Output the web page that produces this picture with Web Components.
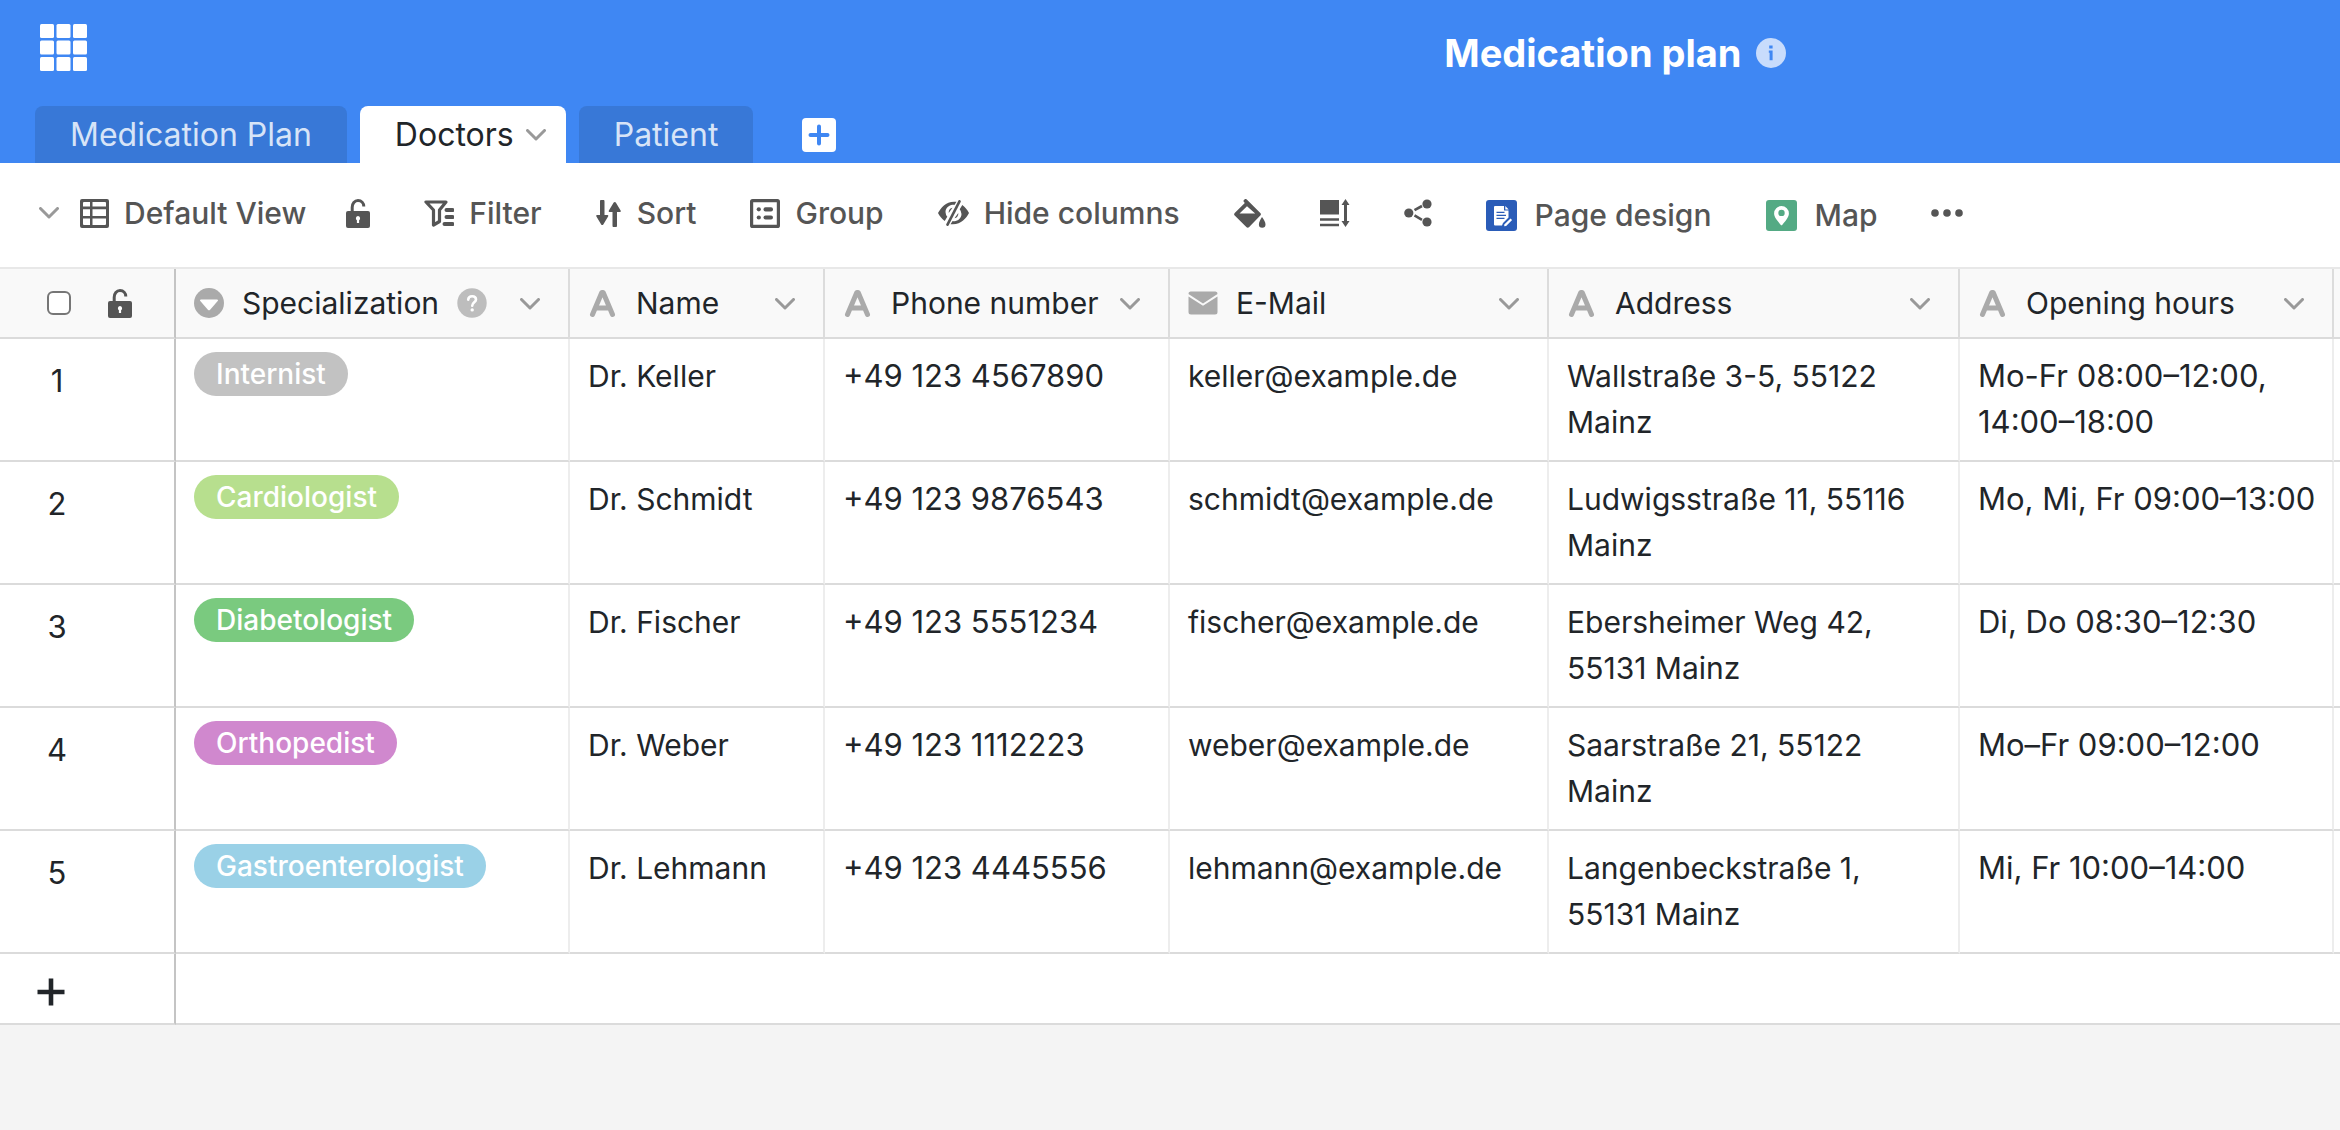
<!DOCTYPE html>
<html lang="en">
<head>
<meta charset="utf-8">
<meta name="viewport" content="width=device-width, initial-scale=1">
<title>Medication plan</title>
<style>
  html, body { margin: 0; min-height: 100%; background: #f4f4f4; }
  body { font-family: Inter, "Liberation Sans", sans-serif; color: #212529; }
</style>
</head>
<body>
<base-app></base-app>

<script>
const ICONS = {
  apps: ['0 0 47 47', '<g fill="#fff"><rect width="14" height="14" rx="1.5"/><rect x="16.5" width="14" height="14" rx="1.5"/><rect x="33" width="14" height="14" rx="1.5"/><rect y="16.5" width="14" height="14" rx="1.5"/><rect x="16.5" y="16.5" width="14" height="14" rx="1.5"/><rect x="33" y="16.5" width="14" height="14" rx="1.5"/><rect y="33" width="14" height="14" rx="1.5"/><rect x="16.5" y="33" width="14" height="14" rx="1.5"/><rect x="33" y="33" width="14" height="14" rx="1.5"/></g>'],
  info: ['0 0 30 30', '<circle cx="15" cy="15" r="15" fill="#c8dcfc"/><path d="M13.2 7.4h3.4v3.2h-3.4zM12.8 12.6h3.8v9.6h-3v-7.4h-.8z" fill="#3f87f3"/>'],
  chevron: ['0 0 20 12', '<path d="M1.5 1.500 10 10 18.500 1.500" fill="none" stroke="currentColor" stroke-width="3" stroke-linecap="round" stroke-linejoin="round"/>'],
  addTab: ['0 0 34 34', '<rect width="34" height="34" rx="4" fill="#fff"/><path d="M17 8.500v17M8.500 17h17" stroke="#3f87f3" stroke-width="4" stroke-linecap="round"/>'],
  table: ['0 0 29 29', '<path fill="currentColor" fill-rule="evenodd" d="M2 0h25a2 2 0 0 1 2 2v25a2 2 0 0 1-2 2H2a2 2 0 0 1-2-2V2a2 2 0 0 1 2-2zm2 3a1 1 0 0 0-1 1v3.500h7V3zm8.500 0v4.500H26V4a1 1 0 0 0-1-1zM3 10.300V17h7v-6.700zm9.500 0V17H26v-6.700zM3 19.500V25a1 1 0 0 0 1 1h6v-6.500zm9.500 0V26H25a1 1 0 0 0 1-1v-5.500z"/>'],
  lock: ['0 0 24 29', '<path d="M6.200 13V8.200C6.200 4.600 8.600 1.500 12 1.500s5.800 2.600 5.800 6" fill="none" stroke="currentColor" stroke-width="3"/><rect y="12" width="24" height="17" rx="2" fill="currentColor"/><path d="M12 17a2.300 2.300 0 0 0-1.100 4.200V24h2.200v-2.800A2.300 2.300 0 0 0 12 17z" fill="#fff"/>'],
  filter: ['0 0 30 28', '<path d="M2 3h20l-6.500 8v11.500L9.500 26V11z" fill="none" stroke="currentColor" stroke-width="3.200" stroke-linejoin="round"/><path d="M22.500 11h6M22.500 18h6M20.500 25h8" stroke="currentColor" stroke-width="4" stroke-linecap="round"/>'],
  sort: ['0 0 26 27', '<g fill="currentColor"><path d="M4 1.500a1.500 1.500 0 0 1 4.500 0V15h3c.8 0 1 .8.600 1.400L7.300 24.500c-.5.800-1.600.8-2.100 0L.4 16.400c-.4-.600-.2-1.400.6-1.400h3z"/><path d="M16.500 25.500a1.500 1.500 0 0 0 4.500 0V12h3c.8 0 1-.8.600-1.400L19.800 2.500c-.5-.8-1.600-.8-2.100 0l-4.800 8.100c-.4.600-.2 1.400.6 1.400h3z"/></g>'],
  group: ['0 0 30 29', '<rect x="1.600" y="1.600" width="26.800" height="25.800" rx="1" fill="none" stroke="currentColor" stroke-width="3.200"/><g fill="currentColor"><circle cx="8.800" cy="10.300" r="2.100"/><circle cx="8.800" cy="18.500" r="2.100"/><rect x="13.500" y="8.200" width="9.500" height="4.200" rx="2"/><rect x="13.500" y="16.400" width="9.500" height="4.200" rx="2"/></g>'],
  hide: ['0 0 31 26', '<g fill="currentColor"><path d="M18.500 1.800C8.500.5 3 7.500 0 13c1.500 3 3.800 5.800 6.700 8l2.600-4.200A8 8 0 0 1 7.500 12c0-4 3.500-7 7-7.300.8 0 1.300 0 1.900.2z"/><path d="M14.500 7.700c-2.500.3-4 2.500-3.800 5.300z"/><path d="M12.500 24.200C22.500 25.500 28 18.500 31 13c-1.500-3-3.800-5.800-6.700-8l-2.600 4.200a8 8 0 0 1 1.800 4.800c0 4-3.500 7-7 7.300-.8 0-1.300 0-1.900-.2z"/><path d="M16.500 18.300c2.500-.3 4-2.500 3.800-5.300z"/></g><path d="M21.500 1.300 9.500 24.700" stroke="currentColor" stroke-width="2.600" stroke-linecap="round"/>'],
  fill: ['0 0 32 29', '<path fill="currentColor" fill-rule="evenodd" d="M10.500.5c1-.8 2-.4 2.800.4L26.300 14c.8.800.8 1.700 0 2.500L15.200 28c-.9.900-2 .9-2.900 0L.7 16.500c-.8-.8-.8-1.800 0-2.600L10.800 4 9.600 2.600c-.4-.7 0-1.500.9-2.100zM13 7.200 5.500 14.600h15.700z"/><path fill="currentColor" d="M28 18c2 3 3.500 5.200 3.500 7.400a3.200 3.200 0 0 1-6.600 0c0-2.200 1.300-4.400 3.100-7.400z"/>'],
  rowHeight: ['0 0 30 28', '<path d="M0 1h19v14.500H0z" fill="currentColor"/><path d="M0 20.500h19M0 26h19" stroke="currentColor" stroke-width="2.400"/><path d="M25.500 4v20" stroke="currentColor" stroke-width="3"/><path d="m25.500 0 4 6h-8zM25.500 28l4-6h-8z" fill="currentColor"/>'],
  share: ['0 0 28 28', '<path d="m10.500 11.200 7.500-4.200M10.500 16.400l7.500 4.400" stroke="currentColor" stroke-width="2.600"/><g fill="currentColor"><circle cx="4.800" cy="14" r="4.600"/><circle cx="23" cy="5" r="4.600"/><circle cx="23" cy="23" r="4.600"/></g>'],
  page: ['0 0 31 31', '<rect width="31" height="31" rx="3" fill="#2a5cb8"/><path d="M9 6h9v4.500h4.500v7L17 23l-1 2.500H9a1 1 0 0 1-1-1V7a1 1 0 0 1 1-1z" fill="#fff"/><path d="m19.300 6 3.400 3.400h-3.400z" fill="#fff"/><path d="M10.500 12.400h8M10.500 15.400h9.500M10.500 18.400h8" stroke="#2a5cb8" stroke-width="1.400"/><path d="m24.500 18.500 1.600 1.600-6 5.800-2 .4.400-2z" fill="#fff"/>'],
  map: ['0 0 31 31', '<rect width="31" height="31" rx="3" fill="#54aa84"/><path fill="#fff" fill-rule="evenodd" d="M15.500 6a7.400 7.400 0 0 1 7.400 7.500c0 4-4.200 8.200-6.500 11.300-.6.700-1.200.7-1.800 0-2.300-3.100-6.500-7.300-6.500-11.300A7.400 7.400 0 0 1 15.500 6zm0 3.700a3.200 3.200 0 1 0 0 6.400 3.200 3.200 0 0 0 0-6.400z"/>'],
  more: ['0 0 32 8', '<g fill="currentColor"><circle cx="4" cy="4" r="3.800"/><circle cx="16" cy="4" r="3.800"/><circle cx="28" cy="4" r="3.800"/></g>'],
  select: ['0 0 30 30', '<circle cx="15" cy="15" r="15" fill="#aaa"/><path d="M7 11.500h16c1 0 1.300.8.700 1.500l-7.600 8.700c-.7.800-1.500.8-2.200 0L6.300 13c-.6-.7-.3-1.500.7-1.500z" fill="#fff"/>'],
  text: ['0 0 30 30', '<path d="M4.500 26.500 13.800 4.500h1.400L24.500 26.500M9 20h11.500" fill="none" stroke="#aaa" stroke-width="5" stroke-linecap="round" stroke-linejoin="round"/>'],
  mail: ['0 0 30 30', '<g fill="#aaa"><path d="M2.500 3.500h25a2.300 2.300 0 0 1 2 2.500L15 15.500.5 6a2.300 2.300 0 0 1 2-2.500z"/><path d="m.5 8.500 14.500 9.300L29.500 8.500V24a2.500 2.500 0 0 1-2.500 2.500H3A2.500 2.500 0 0 1 .5 24z"/></g>'],
  help: ['0 0 30 30', '<circle cx="15" cy="15" r="14.700" fill="#bdbdbd"/><path d="M11.200 11.600c.2-2.200 1.700-3.400 3.900-3.400s3.900 1.300 3.900 3.300c0 2.700-3.700 3-3.800 6.300" fill="none" stroke="#fff" stroke-width="2.600" stroke-linecap="round"/><circle cx="15.200" cy="21.900" r="1.700" fill="#fff"/>'],
  plus: ['0 0 28 28', '<path d="M14 .5v27M.5 14h27" stroke="#212529" stroke-width="4.600"/>']
};

function define(name, css, html) {
  const template = document.createElement('template');
  template.innerHTML = `<style>*{box-sizing:border-box}button{font:inherit;color:inherit;background:none;border:0;padding:0;margin:0;text-align:left;cursor:pointer}${css}</style>${html}`;
  customElements.define(name, class extends HTMLElement {
    constructor() {
      super();
      this.attachShadow({ mode: 'open' }).append(template.content.cloneNode(true));
    }
  });
}

customElements.define('base-icon', class extends HTMLElement {
  connectedCallback() {
    if (this.shadowRoot) return;
    const [box, art] = ICONS[this.getAttribute('name')];
    const [, , w, h] = box.split(' ');
    this.attachShadow({ mode: 'open' }).innerHTML =
      `<style>:host{display:block;flex:none}svg{display:block}</style><svg width="${w}" height="${h}" viewBox="${box}" aria-hidden="true">${art}</svg>`;
  }
});

define('sheet-tab', `
  :host { display: block; }
  button { display: flex; align-items: center; gap: 12px; height: 57px; padding: 0 35px; border-radius: 8px 8px 0 0;
    background: #3878d7; color: #d7e4f7; font-size: 32px; line-height: 48px; white-space: nowrap; }
  :host([active]) button { background: #fff; color: #212529; padding-right: 20px; }
  base-icon { display: none; color: #999; }
  :host([active]) base-icon { display: block; }
`, `<button role="tab"><slot></slot><base-icon name="chevron"></base-icon></button>`);

define('base-header', `
  :host { display: flex; flex-direction: column; justify-content: space-between; min-height: 163px; background: #3f87f3; color: #fff; }
  .top { display: flex; align-items: flex-start; padding: 24px 40px 0; }
  .title { display: flex; align-items: center; gap: 14px; height: 58px; }
  .before { flex: 1356; } .after { flex: 514; }
  h1 { margin: 0; font-size: 38px; line-height: 48px; font-weight: 700; white-space: nowrap; }
  nav { display: flex; align-items: center; gap: 13px; padding-left: 35px; }
  .add { margin-left: 36px; }
`, `<div class="top">
    <button aria-label="All bases"><base-icon name="apps"></base-icon></button>
    <div class="before"></div>
    <div class="title"><h1><slot></slot></h1><button aria-label="Base information"><base-icon name="info"></base-icon></button></div>
    <div class="after"></div>
  </div>
  <nav>
    <sheet-tab>Medication Plan</sheet-tab><sheet-tab active>Doctors</sheet-tab><sheet-tab>Patient</sheet-tab>
    <button class="add" aria-label="Add table"><base-icon name="addTab"></base-icon></button>
  </nav>`);

define('tool-button', `
  :host { display: block; }
  button { display: flex; align-items: center; gap: 15px; font-size: 30px; font-weight: 500; line-height: 40px; white-space: nowrap; }
  :host([plugin]) button { gap: 18px; padding-top: 4px; }
`, `<button><slot name="icon"></slot><slot></slot></button>`);

define('view-toolbar', `
  :host { display: flex; align-items: center; gap: 54px; height: 104px; padding: 0 39px 4px; background: #fff; color: #555; }
  .view { display: flex; align-items: center; gap: 21px; }
  .lock { margin-left: -14px; }
  .chev { color: #999; }
`, `<div class="view"><button class="chev" aria-label="Show views"><base-icon name="chevron"></base-icon></button>
    <tool-button><base-icon slot="icon" name="table"></base-icon>Default View</tool-button></div>
  <tool-button class="lock" aria-label="Lock view"><base-icon slot="icon" name="lock"></base-icon></tool-button>
  <tool-button><base-icon slot="icon" name="filter"></base-icon>Filter</tool-button>
  <tool-button><base-icon slot="icon" name="sort"></base-icon>Sort</tool-button>
  <tool-button><base-icon slot="icon" name="group"></base-icon>Group</tool-button>
  <tool-button><base-icon slot="icon" name="hide"></base-icon>Hide columns</tool-button>
  <tool-button aria-label="Row colour"><base-icon slot="icon" name="fill"></base-icon></tool-button>
  <tool-button aria-label="Row height"><base-icon slot="icon" name="rowHeight"></base-icon></tool-button>
  <tool-button aria-label="Share"><base-icon slot="icon" name="share"></base-icon></tool-button>
  <tool-button plugin><base-icon slot="icon" name="page"></base-icon>Page design</tool-button>
  <tool-button plugin><base-icon slot="icon" name="map"></base-icon>Map</tool-button>
  <tool-button aria-label="More"><base-icon slot="icon" name="more"></base-icon></tool-button>`);

define('column-head', `
  :host { display: flex; align-items: center; padding: 0 28px 0 18px; height: 68px; font-size: 30px; font-weight: 400; white-space: nowrap; }
  .name { padding-left: 18px; }
  .menu { margin-left: auto; color: #999; padding-top: 2px; }
  ::slotted([slot=help]) { margin-left: 18px; }
`, `<slot name="icon"></slot><span class="name"><slot></slot></span><slot name="help"></slot>
  <button class="menu" aria-label="Column menu"><base-icon name="chevron"></base-icon></button>`);

define('select-chip', `
  :host { display: inline-block; height: 44px; padding: 0 22px; border-radius: 22px; color: #fff; font-size: 28px; font-weight: 500; line-height: 44px; white-space: nowrap; vertical-align: top; }
  :host([tone=grey]) { background: #c2c2c2; }
  :host([tone=lime]) { background: #b7df8e; }
  :host([tone=green]) { background: #7aca7f; }
  :host([tone=violet]) { background: #d088ce; }
  :host([tone=sky]) { background: #9ad1e7; }
`, `<slot></slot>`);

const COLUMNS = [
  ['select', 'Specialization', 394], ['text', 'Name', 255], ['text', 'Phone number', 345],
  ['mail', 'E-Mail', 379], ['text', 'Address', 411], ['text', 'Opening hours', 374]
];
const ROWS = [
  ['grey', 'Internist', 'Dr. Keller', '+49 123 4567890', 'keller@example.de', 'Wallstraße 3-5, 55122 Mainz', 'Mo-Fr 08:00–12:00, 14:00–18:00'],
  ['lime', 'Cardiologist', 'Dr. Schmidt', '+49 123 9876543', 'schmidt@example.de', 'Ludwigsstraße 11, 55116 Mainz', 'Mo, Mi, Fr 09:00–13:00'],
  ['green', 'Diabetologist', 'Dr. Fischer', '+49 123 5551234', 'fischer@example.de', 'Ebersheimer Weg 42, 55131 Mainz', 'Di, Do 08:30–12:30'],
  ['violet', 'Orthopedist', 'Dr. Weber', '+49 123 1112223', 'weber@example.de', 'Saarstraße 21, 55122 Mainz', 'Mo–Fr 09:00–12:00'],
  ['sky', 'Gastroenterologist', 'Dr. Lehmann', '+49 123 4445556', 'lehmann@example.de', 'Langenbeckstraße 1, 55131 Mainz', 'Mi, Fr 10:00–14:00']
];
const NUMERIC = [1, 4];

define('data-grid', `
  :host { display: block; overflow-x: auto; border-top: 2px solid #e8e8e8; }
  table { width: 100%; table-layout: fixed; border-collapse: separate; border-spacing: 0; background: #fff; }
  th, td { padding: 0; border-bottom: 2px solid #dbdbdb; border-right: 2px solid #ededed; text-align: left; vertical-align: top; }
  thead th { background: #f9f9f9; border-right-color: #dcdcdc; }
  tr > :first-child { border-right-color: #c4c4c4; }
  tr > :last-child { border-right: 0; }
  .corner { display: flex; align-items: center; gap: 36px; height: 68px; padding-left: 47px; color: #555; }
  input { appearance: none; width: 24px; height: 24px; margin: 0 1px 0 0; border: 2px solid #767676; border-radius: 6px; background: #fff; }
  tbody td { padding: 14px 14px 15px 18px; height: 123px; font-size: 30px; line-height: 46px; }
  tbody th { padding: 19px 0 0; height: 123px; font-size: 31px; line-height: 46px; font-weight: 400; }
  .number { display: block; width: 114px; text-align: center; }
  tbody .chips { padding-top: 13px; }
  tbody .numeric { font-size: 31px; }
  tfoot td { height: 71px; padding-top: 6px; vertical-align: middle; }
  tfoot button { display: block; padding-left: 37px; }
`, `<table>
  <colgroup><col style="width:176px">${COLUMNS.map(c => `<col style="width:${c[2]}px">`).join('')}<col></colgroup>
  <thead><tr>
    <th><div class="corner"><input type="checkbox" aria-label="Select all rows"><base-icon name="lock"></base-icon></div></th>
    ${COLUMNS.map(([icon, name], i) => `<th scope="col"><column-head><base-icon slot="icon" name="${icon}"></base-icon>${name}${i ? '' : '<base-icon slot="help" name="help"></base-icon>'}</column-head></th>`).join('')}
    <th></th></tr></thead>
  <tbody>${ROWS.map(([tone, chip, ...cells], i) => `<tr><th scope="row"><span class="number">${i + 1}</span></th>
    <td class="chips"><select-chip tone="${tone}">${chip}</select-chip></td>
    ${cells.map((c, n) => `<td${NUMERIC.includes(n) ? ' class="numeric"' : ''}>${c}</td>`).join('')}<td></td></tr>`).join('')}</tbody>
  <tfoot><tr><td><button aria-label="Add row"><base-icon name="plus"></base-icon></button></td><td colspan="7"></td></tr></tfoot>
</table>`);

define('base-app', `:host { display: block; }`,
  `<base-header>Medication plan</base-header><view-toolbar></view-toolbar><main><data-grid></data-grid></main>`);
</script>
</body>
</html>
